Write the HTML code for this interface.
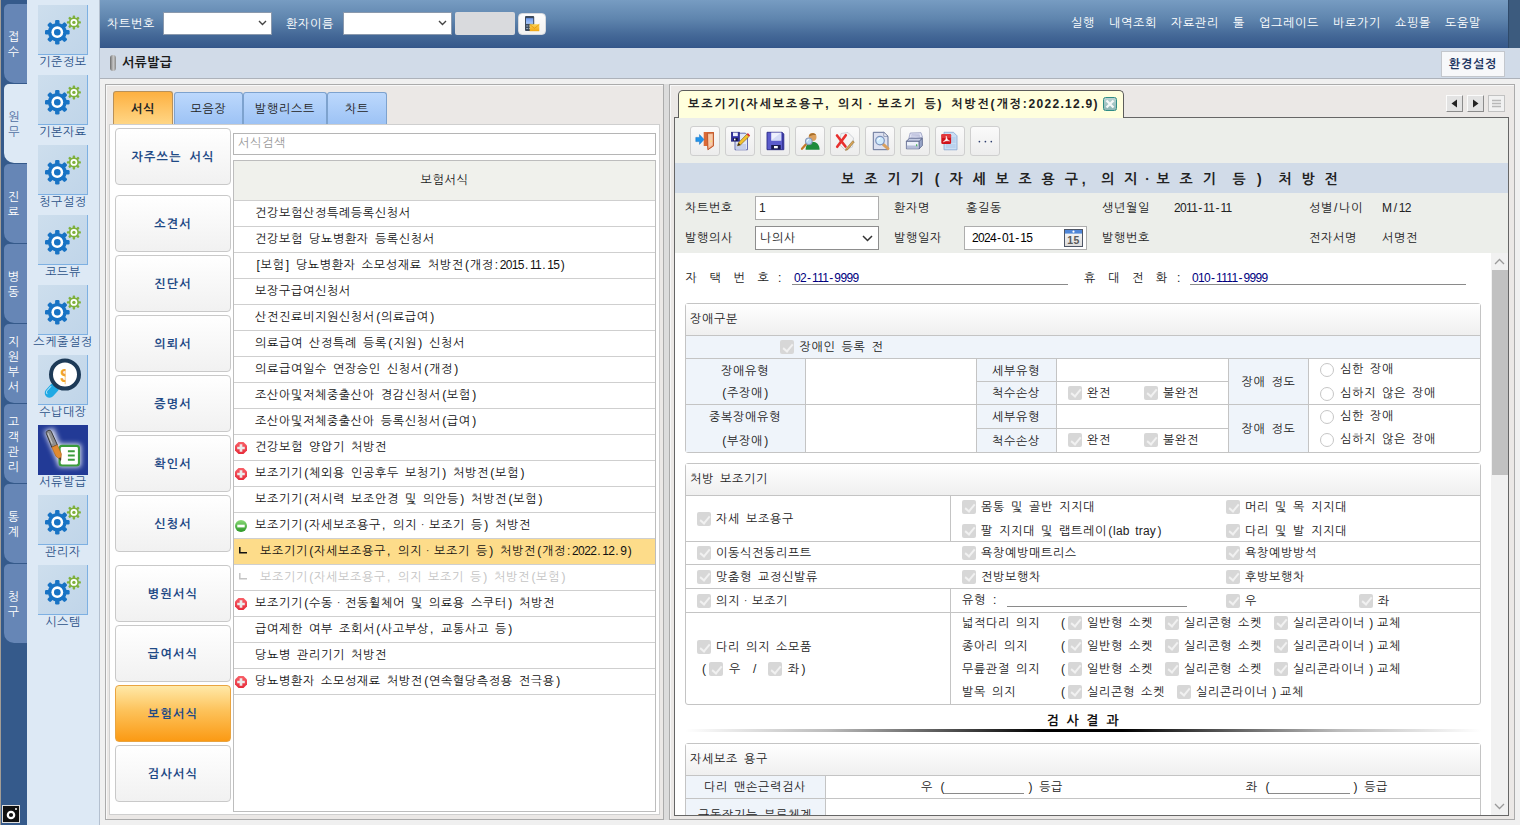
<!DOCTYPE html><html lang="ko"><head><meta charset="utf-8"><title>서류발급</title><style>
*{box-sizing:border-box;margin:0;padding:0}
html,body{width:1520px;height:825px;overflow:hidden;background:#f0f0f0}
body{position:relative;font-family:"Liberation Sans","NanumGothic",sans-serif;font-size:12px;letter-spacing:.7px;word-spacing:2px;color:#222;line-height:14px}
.abs{position:absolute}
.n{letter-spacing:-.65px}
.q{margin-left:1.4px}
.p{margin-left:1px;letter-spacing:1.7px}
.d{margin:0 1px;letter-spacing:0}
.b{font-weight:bold}
/* far-left strip */
#strip{left:0;top:0;width:27px;height:825px;background:#355a8b;border-left:1px solid #a39d95}
.vt{position:absolute;left:3px;width:24px;padding-right:5px;padding-top:2px;height:79px;background:#6686b6;border-radius:5px 0 0 10px;color:#fff;text-align:center;display:flex;flex-direction:column;justify-content:center;line-height:15px;letter-spacing:0;box-shadow:inset -1px 0 0 #5474a4}
.vt.sel{background:#dde9f5;color:#4f6ea2;width:25px;box-shadow:none}
#icol{left:27px;top:0;width:73px;height:825px;background:#dde9f5;border-right:1px solid #b4c0cf}
.tile{position:absolute;left:11px;width:50px;height:50px;background:linear-gradient(135deg,#cddeed,#c0d5e9);border-right:1px solid #7db0e2;border-bottom:1px solid #7db0e2}
.tl{position:absolute;left:0;width:72px;text-align:center;color:#2b5288;white-space:nowrap;letter-spacing:.6px}
/* top bar */
#top{left:100px;top:0;width:1420px;height:48px;background:linear-gradient(#779cc2 0,#5f85ae 40%,#446897 75%,#36598b 100%);border-bottom:1px solid #34568a;color:#fff}
#top .lb{position:absolute;top:17px;white-space:nowrap}
.cmb{position:absolute;top:12px;height:23px;background:#fff;border:1px solid #8a99ad}
#titlebar{left:100px;top:48px;width:1420px;height:31px;background:#d1dbe8;border-bottom:1px solid #adb2ba}
/* panels */
.panel{background:#ebe8e6;border:1px solid #ababab;box-shadow:inset 1px 1px 0 #f8f8f8}
.tab{position:absolute;height:33px;border:1px solid #7da2ce;border-bottom:none;border-radius:3px 3px 0 0;background:linear-gradient(#bcd8fc,#9cc2f5);text-align:center;line-height:32px;letter-spacing:.8px}
.tab.on{background:linear-gradient(#fdb040,#fec668 55%,#ffd787);border-color:#b8915a;font-weight:bold}
.sbtn{position:absolute;left:10px;width:116px;height:57px;border:1px solid #c9c9c9;border-radius:4px;background:linear-gradient(#ffffff,#f1f1f1);color:#1f4a86;font-weight:bold;text-align:center;line-height:55px;letter-spacing:1.3px;word-spacing:3px}
.sbtn.on{background:linear-gradient(#ffe9a8 0,#fdc25a 45%,#fb9a14 100%);border-color:#e9a440}
.row{position:absolute;left:0;width:421px;height:26px;border-bottom:1px solid #cfcfcf;line-height:25px;white-space:nowrap;color:#111;padding-left:21px}
.row.sub{padding-left:26px}
.ico{position:absolute;left:1px;top:7px;width:12px;height:12px}
/* form */
.gb{position:absolute;border:1px solid #c4c4c4;border-radius:3px;background:#fff;overflow:hidden}
.gh{position:absolute;left:0;top:0;right:0;height:31px;background:linear-gradient(#ffffff,#f0f0f0);border-bottom:1px solid #c4c4c4;line-height:29px;padding-left:4px}
.hl{position:absolute;height:1px;background:#c4c4c4}
.vl{position:absolute;width:1px;background:#c4c4c4}
.lbc{position:absolute;background:#eff4fa;text-align:center}
.t{position:absolute;white-space:nowrap;line-height:14px}
.cb{position:absolute;width:14px;height:14px;border-radius:2px;background:#d7d7d7}
.cb:after{content:"";position:absolute;left:4.5px;top:1.5px;width:4px;height:8px;border:solid #f1f1f1;border-width:0 2px 2px 0;transform:rotate(40deg)}
.rd{position:absolute;width:14px;height:14px;border-radius:50%;border:1px solid #c6c6c6;background:#fff}
.tb{position:absolute;top:9px;width:30px;height:30px;border:1px solid #cfcfcf;border-radius:3px;background:linear-gradient(#fafafa,#ececec)}
.tb svg{position:absolute;left:5px;top:5px;overflow:visible}
</style></head><body>
<svg width="0" height="0" style="position:absolute"><defs><linearGradient id="rg" x1="0" y1="0" x2="0" y2="1"><stop offset="0" stop-color="#f86068"/><stop offset="1" stop-color="#e62c3a"/></linearGradient><linearGradient id="gg" x1="0" y1="0" x2="0" y2="1"><stop offset="0" stop-color="#8adb78"/><stop offset="1" stop-color="#2b9626"/></linearGradient></defs></svg>
<div id="strip" class="abs">
<div class="vt" style="top:4px"><span>접</span><span>수</span></div>
<div class="vt sel" style="top:84px"><span>원</span><span>무</span></div>
<div class="vt" style="top:164px"><span>진</span><span>료</span></div>
<div class="vt" style="top:244px"><span>병</span><span>동</span></div>
<div class="vt" style="top:324px"><span>지</span><span>원</span><span>부</span><span>서</span></div>
<div class="vt" style="top:404px"><span>고</span><span>객</span><span>관</span><span>리</span></div>
<div class="vt" style="top:484px"><span>통</span><span>계</span></div>
<div class="vt" style="top:564px"><span>청</span><span>구</span></div>
<div class="abs" style="left:1px;top:805px;width:18px;height:18px;background:#111;border:1px solid #ddd"><svg width="16" height="16" viewBox="0 0 16 16"><circle cx="8" cy="9" r="3.2" fill="none" stroke="#fff" stroke-width="2.2"/><circle cx="13" cy="3" r="1" fill="#fff"/></svg></div>
</div>
<div id="icol" class="abs">
<div class="tile" style="top:5px"><svg width="50" height="50" viewBox="0 0 50 50"><g transform="translate(19.300,27.200)"><g fill="#1873c4"><rect x="-2.200" y="-12.300" width="4.400" height="24.600" rx="1.200" transform="rotate(0)"/><rect x="-2.200" y="-12.300" width="4.400" height="24.600" rx="1.200" transform="rotate(45)"/><rect x="-2.200" y="-12.300" width="4.400" height="24.600" rx="1.200" transform="rotate(90)"/><rect x="-2.200" y="-12.300" width="4.400" height="24.600" rx="1.200" transform="rotate(135)"/><circle r="9.300"/></g><circle r="5.900" fill="#fff"/><circle r="3.300" fill="#1873c4"/></g><g transform="translate(35.900,17.400)"><g fill="#7fb13c"><rect x="-1.200" y="-7" width="2.400" height="14" rx=".700" transform="rotate(0)"/><rect x="-1.200" y="-7" width="2.400" height="14" rx=".700" transform="rotate(45)"/><rect x="-1.200" y="-7" width="2.400" height="14" rx=".700" transform="rotate(90)"/><rect x="-1.200" y="-7" width="2.400" height="14" rx=".700" transform="rotate(135)"/><circle r="5"/></g><circle r="3.400" fill="#fff"/><circle r="1.700" fill="#7fb13c"/></g></svg></div>
<div class="tl" style="top:55px">기준정보</div>
<div class="tile" style="top:75px"><svg width="50" height="50" viewBox="0 0 50 50"><g transform="translate(19.300,27.200)"><g fill="#1873c4"><rect x="-2.200" y="-12.300" width="4.400" height="24.600" rx="1.200" transform="rotate(0)"/><rect x="-2.200" y="-12.300" width="4.400" height="24.600" rx="1.200" transform="rotate(45)"/><rect x="-2.200" y="-12.300" width="4.400" height="24.600" rx="1.200" transform="rotate(90)"/><rect x="-2.200" y="-12.300" width="4.400" height="24.600" rx="1.200" transform="rotate(135)"/><circle r="9.300"/></g><circle r="5.900" fill="#fff"/><circle r="3.300" fill="#1873c4"/></g><g transform="translate(35.900,17.400)"><g fill="#7fb13c"><rect x="-1.200" y="-7" width="2.400" height="14" rx=".700" transform="rotate(0)"/><rect x="-1.200" y="-7" width="2.400" height="14" rx=".700" transform="rotate(45)"/><rect x="-1.200" y="-7" width="2.400" height="14" rx=".700" transform="rotate(90)"/><rect x="-1.200" y="-7" width="2.400" height="14" rx=".700" transform="rotate(135)"/><circle r="5"/></g><circle r="3.400" fill="#fff"/><circle r="1.700" fill="#7fb13c"/></g></svg></div>
<div class="tl" style="top:125px">기본자료</div>
<div class="tile" style="top:145px"><svg width="50" height="50" viewBox="0 0 50 50"><g transform="translate(19.300,27.200)"><g fill="#1873c4"><rect x="-2.200" y="-12.300" width="4.400" height="24.600" rx="1.200" transform="rotate(0)"/><rect x="-2.200" y="-12.300" width="4.400" height="24.600" rx="1.200" transform="rotate(45)"/><rect x="-2.200" y="-12.300" width="4.400" height="24.600" rx="1.200" transform="rotate(90)"/><rect x="-2.200" y="-12.300" width="4.400" height="24.600" rx="1.200" transform="rotate(135)"/><circle r="9.300"/></g><circle r="5.900" fill="#fff"/><circle r="3.300" fill="#1873c4"/></g><g transform="translate(35.900,17.400)"><g fill="#7fb13c"><rect x="-1.200" y="-7" width="2.400" height="14" rx=".700" transform="rotate(0)"/><rect x="-1.200" y="-7" width="2.400" height="14" rx=".700" transform="rotate(45)"/><rect x="-1.200" y="-7" width="2.400" height="14" rx=".700" transform="rotate(90)"/><rect x="-1.200" y="-7" width="2.400" height="14" rx=".700" transform="rotate(135)"/><circle r="5"/></g><circle r="3.400" fill="#fff"/><circle r="1.700" fill="#7fb13c"/></g></svg></div>
<div class="tl" style="top:195px">청구설정</div>
<div class="tile" style="top:215px"><svg width="50" height="50" viewBox="0 0 50 50"><g transform="translate(19.300,27.200)"><g fill="#1873c4"><rect x="-2.200" y="-12.300" width="4.400" height="24.600" rx="1.200" transform="rotate(0)"/><rect x="-2.200" y="-12.300" width="4.400" height="24.600" rx="1.200" transform="rotate(45)"/><rect x="-2.200" y="-12.300" width="4.400" height="24.600" rx="1.200" transform="rotate(90)"/><rect x="-2.200" y="-12.300" width="4.400" height="24.600" rx="1.200" transform="rotate(135)"/><circle r="9.300"/></g><circle r="5.900" fill="#fff"/><circle r="3.300" fill="#1873c4"/></g><g transform="translate(35.900,17.400)"><g fill="#7fb13c"><rect x="-1.200" y="-7" width="2.400" height="14" rx=".700" transform="rotate(0)"/><rect x="-1.200" y="-7" width="2.400" height="14" rx=".700" transform="rotate(45)"/><rect x="-1.200" y="-7" width="2.400" height="14" rx=".700" transform="rotate(90)"/><rect x="-1.200" y="-7" width="2.400" height="14" rx=".700" transform="rotate(135)"/><circle r="5"/></g><circle r="3.400" fill="#fff"/><circle r="1.700" fill="#7fb13c"/></g></svg></div>
<div class="tl" style="top:265px">코드뷰</div>
<div class="tile" style="top:285px"><svg width="50" height="50" viewBox="0 0 50 50"><g transform="translate(19.300,27.200)"><g fill="#1873c4"><rect x="-2.200" y="-12.300" width="4.400" height="24.600" rx="1.200" transform="rotate(0)"/><rect x="-2.200" y="-12.300" width="4.400" height="24.600" rx="1.200" transform="rotate(45)"/><rect x="-2.200" y="-12.300" width="4.400" height="24.600" rx="1.200" transform="rotate(90)"/><rect x="-2.200" y="-12.300" width="4.400" height="24.600" rx="1.200" transform="rotate(135)"/><circle r="9.300"/></g><circle r="5.900" fill="#fff"/><circle r="3.300" fill="#1873c4"/></g><g transform="translate(35.900,17.400)"><g fill="#7fb13c"><rect x="-1.200" y="-7" width="2.400" height="14" rx=".700" transform="rotate(0)"/><rect x="-1.200" y="-7" width="2.400" height="14" rx=".700" transform="rotate(45)"/><rect x="-1.200" y="-7" width="2.400" height="14" rx=".700" transform="rotate(90)"/><rect x="-1.200" y="-7" width="2.400" height="14" rx=".700" transform="rotate(135)"/><circle r="5"/></g><circle r="3.400" fill="#fff"/><circle r="1.700" fill="#7fb13c"/></g></svg></div>
<div class="tl" style="top:335px">스케줄설정</div>
<div class="tile" style="top:355px"><svg width="50" height="50" viewBox="0 0 50 50"><defs><clipPath id="hc"><rect x="0" y="0" width="27.600" height="50"/></clipPath></defs><path d="M16.500 32.500L11.500 38" stroke="#1fa9e4" stroke-width="9.500" stroke-linecap="round"/><path d="M12.800 31.500l-3.600 4c-1 1.200-.8 2.600-.2 3.300" fill="none" stroke="#d6f0fc" stroke-width="1" stroke-linecap="round"/><circle cx="27" cy="19.600" r="14" fill="#fff" stroke="#1d3a57" stroke-width="4"/><text x="27.600" y="26.600" font-size="19" font-weight="bold" text-anchor="middle" fill="#f0a22e" font-family="Liberation Sans,sans-serif" letter-spacing="0" clip-path="url(#hc)">$</text></svg></div>
<div class="tl" style="top:405px">수납대장</div>
<div class="tile" style="top:425px;background:#223a96;border:none"><svg width="50" height="50" viewBox="0 0 51 51"><defs><filter id="gl" x="-30%" y="-30%" width="160%" height="160%"><feGaussianBlur stdDeviation="2.600"/></filter></defs><rect width="51" height="51" fill="#223a96"/><g filter="url(#gl)" fill="#fff" opacity=".85"><rect x="20" y="19" width="24" height="24" rx="3"/><path d="M6 6l10-3 12 32-8 4z"/></g><rect x="22" y="21.300" width="19.800" height="20" rx="2.500" fill="#fff" stroke="#3b9c3c" stroke-width="2.200"/><path d="M30.500 26.800h7M30.500 31.100h7M30.500 35.400h7" stroke="#3b9c3c" stroke-width="1.900"/><path d="M8.500 8.600c-.8-2.600 3.800-4.500 5-2l6.200 13.600-5.600 2.600z" fill="#8d8d8d" stroke="#333" stroke-width="1"/><path d="M10 8.500l4.500 10.500" stroke="#c8c8c8" stroke-width="1.200"/><path d="M14.100 22.800l5.600-2.600 4.200 9.300-.6 6.300-5.100-4z" fill="#e08a30" stroke="#a45a18" stroke-width=".6"/><path d="M21.300 33.600l2.100 3.600-.1-4.100z" fill="#3a3a3a"/></svg></div>
<div class="tl" style="top:475px">서류발급</div>
<div class="tile" style="top:495px"><svg width="50" height="50" viewBox="0 0 50 50"><g transform="translate(19.300,27.200)"><g fill="#1873c4"><rect x="-2.200" y="-12.300" width="4.400" height="24.600" rx="1.200" transform="rotate(0)"/><rect x="-2.200" y="-12.300" width="4.400" height="24.600" rx="1.200" transform="rotate(45)"/><rect x="-2.200" y="-12.300" width="4.400" height="24.600" rx="1.200" transform="rotate(90)"/><rect x="-2.200" y="-12.300" width="4.400" height="24.600" rx="1.200" transform="rotate(135)"/><circle r="9.300"/></g><circle r="5.900" fill="#fff"/><circle r="3.300" fill="#1873c4"/></g><g transform="translate(35.900,17.400)"><g fill="#7fb13c"><rect x="-1.200" y="-7" width="2.400" height="14" rx=".700" transform="rotate(0)"/><rect x="-1.200" y="-7" width="2.400" height="14" rx=".700" transform="rotate(45)"/><rect x="-1.200" y="-7" width="2.400" height="14" rx=".700" transform="rotate(90)"/><rect x="-1.200" y="-7" width="2.400" height="14" rx=".700" transform="rotate(135)"/><circle r="5"/></g><circle r="3.400" fill="#fff"/><circle r="1.700" fill="#7fb13c"/></g></svg></div>
<div class="tl" style="top:545px">관리자</div>
<div class="tile" style="top:565px"><svg width="50" height="50" viewBox="0 0 50 50"><g transform="translate(19.300,27.200)"><g fill="#1873c4"><rect x="-2.200" y="-12.300" width="4.400" height="24.600" rx="1.200" transform="rotate(0)"/><rect x="-2.200" y="-12.300" width="4.400" height="24.600" rx="1.200" transform="rotate(45)"/><rect x="-2.200" y="-12.300" width="4.400" height="24.600" rx="1.200" transform="rotate(90)"/><rect x="-2.200" y="-12.300" width="4.400" height="24.600" rx="1.200" transform="rotate(135)"/><circle r="9.300"/></g><circle r="5.900" fill="#fff"/><circle r="3.300" fill="#1873c4"/></g><g transform="translate(35.900,17.400)"><g fill="#7fb13c"><rect x="-1.200" y="-7" width="2.400" height="14" rx=".700" transform="rotate(0)"/><rect x="-1.200" y="-7" width="2.400" height="14" rx=".700" transform="rotate(45)"/><rect x="-1.200" y="-7" width="2.400" height="14" rx=".700" transform="rotate(90)"/><rect x="-1.200" y="-7" width="2.400" height="14" rx=".700" transform="rotate(135)"/><circle r="5"/></g><circle r="3.400" fill="#fff"/><circle r="1.700" fill="#7fb13c"/></g></svg></div>
<div class="tl" style="top:615px">시스템</div>
</div>
<div id="top" class="abs">
<span class="lb" style="left:7px">차트번호</span>
<div class="cmb" style="left:63px;width:109px"><svg class="abs" style="right:4px;top:7px" width="9" height="6" viewBox="0 0 9 6"><path d="M1 1l3.5 3.5L8 1" fill="none" stroke="#444" stroke-width="1.4"/></svg></div>
<span class="lb" style="left:186px">환자이름</span>
<div class="cmb" style="left:243px;width:109px"><svg class="abs" style="right:4px;top:7px" width="9" height="6" viewBox="0 0 9 6"><path d="M1 1l3.5 3.5L8 1" fill="none" stroke="#444" stroke-width="1.4"/></svg></div>
<div class="abs" style="left:355px;top:12px;width:60px;height:23px;background:#d9dadd;border-radius:2px"></div>
<div class="abs" style="left:418px;top:12.500px;width:28px;height:22.500px;background:linear-gradient(#fdfdfd,#f1f1f1);border:1px solid #d6d9de;border-radius:4px"><svg class="abs" style="left:5px;top:1.500px" width="18" height="18" viewBox="0 0 18 18"><defs><linearGradient id="ps" x1="0" y1="0" x2="0" y2="1"><stop offset="0" stop-color="#6f9cf0"/><stop offset="1" stop-color="#a9c8f8"/></linearGradient><linearGradient id="ev" x1="0" y1="0" x2="0" y2="1"><stop offset="0" stop-color="#fcd455"/><stop offset="1" stop-color="#f2a612"/></linearGradient></defs><rect x="1" y="1" width="9.200" height="15" rx="1" fill="#3d4a5c"/><rect x="2" y="3.200" width="7.200" height="5.700" fill="url(#ps)"/><path d="M2.300 11h1.600M4.800 11h1.600M2.300 13.500h1.600M4.800 13.500h1.600" stroke="#9fb4cc" stroke-width="1.200"/><rect x="5.700" y="9.200" width="9.600" height="7" fill="url(#ev)"/><path d="M5.700 9.400l4.800 4 4.800-4" fill="none" stroke="#e3940f" stroke-width=".8"/></svg></div>
<span class="lb" style="left:971px;top:16px">실행</span>
<span class="lb" style="left:1009px;top:16px">내역조회</span>
<span class="lb" style="left:1071px;top:16px">자료관리</span>
<span class="lb" style="left:1133px;top:16px">툴</span>
<span class="lb" style="left:1159px;top:16px">업그레이드</span>
<span class="lb" style="left:1233px;top:16px">바로가기</span>
<span class="lb" style="left:1295px;top:16px">쇼핑몰</span>
<span class="lb" style="left:1345px;top:16px">도움말</span>
<div class="abs" style="left:1408px;top:0;width:12px;height:48px;background:#3c5b7e;border-left:1px solid #2f4a6a"></div>
</div>
<div id="titlebar" class="abs">
<div class="abs" style="left:10px;top:7px;width:6px;height:16px;border-radius:3px;background:linear-gradient(90deg,#6e6e6e,#c8c8c8 55%,#8a8a8a)"></div>
<span class="abs b" style="left:22px;top:8px;font-size:13px;letter-spacing:.4px;color:#1a1a1a;white-space:nowrap">서류발급</span>
<div class="abs b" style="left:1341px;top:3px;width:64px;height:26px;background:#f7f8fa;border:1px solid #c3c7cd;text-align:center;line-height:25px;color:#1d3561;letter-spacing:.8px">환경설정</div>
</div>
<div class="abs panel" style="left:105px;top:84px;width:559px;height:736px">
<div class="tab on" style="left:7px;top:6px;width:60px;height:34px;line-height:34px">서식</div>
<div class="tab" style="left:68px;top:7px;width:69px">모음장</div>
<div class="tab" style="left:137px;top:7px;width:84px">발행리스트</div>
<div class="tab" style="left:221px;top:7px;width:60px">차트</div>
<div class="abs" style="left:3px;top:39px;width:551px;height:691px;background:#fff;border:1px solid #cfcfcf">
<div class="sbtn" style="left:5px;top:3px;height:57px;line-height:57px">자주쓰는 서식</div>
<div class="sbtn" style="left:5px;top:70px;height:57px;line-height:57px">소견서</div>
<div class="sbtn" style="left:5px;top:130px;height:57px;line-height:57px">진단서</div>
<div class="sbtn" style="left:5px;top:190px;height:57px;line-height:57px">의뢰서</div>
<div class="sbtn" style="left:5px;top:250px;height:57px;line-height:57px">증명서</div>
<div class="sbtn" style="left:5px;top:310px;height:57px;line-height:57px">확인서</div>
<div class="sbtn" style="left:5px;top:370px;height:57px;line-height:57px">신청서</div>
<div class="sbtn" style="left:5px;top:440px;height:57px;line-height:57px">병원서식</div>
<div class="sbtn" style="left:5px;top:500px;height:57px;line-height:57px">급여서식</div>
<div class="sbtn on" style="left:5px;top:560px;height:57px;line-height:57px">보험서식</div>
<div class="sbtn" style="left:5px;top:620px;height:57px;line-height:57px">검사서식</div>
<div class="abs" style="left:123px;top:8px;width:423px;height:22px;border:1px solid #b5b5b5;background:#fff;color:#9a9a9a;line-height:19px;padding-left:4px">서식검색</div>
<div class="abs" style="left:123px;top:35px;width:423px;height:652px;border:1px solid #bdbdbd;background:#fff;overflow:hidden">
<div class="abs" style="left:0;top:0;width:421px;height:40px;background:#f0f1ec;border-bottom:1px solid #cfcfcf;text-align:center;line-height:38px">보험서식</div>
<div class="row" style="top:40px">건강보험산정특례등록신청서</div>
<div class="row" style="top:66px">건강보험 당뇨병환자 등록신청서</div>
<div class="row" style="top:92px"><span class="q">[</span>보험<span class="q">]</span> 당뇨병환자 소모성재료 처방전<span class="q">(</span>개정<span class="p">:</span><span class="n">2015</span><span class="p">.</span><span class="n">11</span><span class="p">.</span><span class="n">15</span><span class="q">)</span></div>
<div class="row" style="top:118px">보장구급여신청서</div>
<div class="row" style="top:144px">산전진료비지원신청서<span class="q">(</span>의료급여<span class="q">)</span></div>
<div class="row" style="top:170px">의료급여 산정특례 등록<span class="q">(</span>지원<span class="q">)</span> 신청서</div>
<div class="row" style="top:196px">의료급여일수 연장승인 신청서<span class="q">(</span>개정<span class="q">)</span></div>
<div class="row" style="top:222px">조산아및저체중출산아 경감신청서<span class="q">(</span>보험<span class="q">)</span></div>
<div class="row" style="top:248px">조산아및저체중출산아 등록신청서<span class="q">(</span>급여<span class="q">)</span></div>
<div class="row" style="top:274px"><svg class="ico" viewBox="0 0 12 12"><path d="M3.500 0h5L12 3.500v5L8.500 12h-5L0 8.500v-5z" fill="url(#rg)"/><path d="M6 2.200v7.600M2.200 6h7.600" stroke="#ebebeb" stroke-width="2.700"/></svg>건강보험 양압기 처방전</div>
<div class="row" style="top:300px"><svg class="ico" viewBox="0 0 12 12"><path d="M3.500 0h5L12 3.500v5L8.500 12h-5L0 8.500v-5z" fill="url(#rg)"/><path d="M6 2.200v7.600M2.200 6h7.600" stroke="#ebebeb" stroke-width="2.700"/></svg>보조기기<span class="q">(</span>체외용 인공후두 보청기<span class="q">)</span> 처방전<span class="q">(</span>보험<span class="q">)</span></div>
<div class="row" style="top:326px">보조기기<span class="q">(</span>저시력 보조안경 및 의안등<span class="q">)</span> 처방전<span class="q">(</span>보험<span class="q">)</span></div>
<div class="row" style="top:352px"><svg class="ico" viewBox="0 0 12 12"><circle cx="6" cy="6" r="6" fill="url(#gg)"/><rect x="2.300" y="4.700" width="7.400" height="2.700" fill="#fff"/></svg>보조기기<span class="q">(</span>자세보조용구<span class="p">,</span> 의지ㆍ보조기 등<span class="q">)</span> 처방전</div>
<div class="row sub" style="top:378px;background:#fddc8a;"><svg class="abs" style="left:5px;top:8px" width="8" height="7" viewBox="0 0 8 7"><path d="M.8 0v5.700H8" fill="none" stroke="#111" stroke-width="1.500"/></svg>보조기기<span class="q">(</span>자세보조용구<span class="p">,</span> 의지ㆍ보조기 등<span class="q">)</span> 처방전<span class="q">(</span>개정<span class="p">:</span><span class="n">2022</span><span class="p">.</span><span class="n">12</span><span class="p">.</span><span class="n">9</span><span class="q">)</span></div>
<div class="row sub" style="top:404px;color:#c4c4c4;"><svg class="abs" style="left:5px;top:8px" width="8" height="7" viewBox="0 0 8 7"><path d="M.8 0v5.700H8" fill="none" stroke="#c4c4c4" stroke-width="1.500"/></svg>보조기기<span class="q">(</span>자세보조용구<span class="p">,</span> 의지 보조기 등<span class="q">)</span> 처방전<span class="q">(</span>보험<span class="q">)</span></div>
<div class="row" style="top:430px"><svg class="ico" viewBox="0 0 12 12"><path d="M3.500 0h5L12 3.500v5L8.500 12h-5L0 8.500v-5z" fill="url(#rg)"/><path d="M6 2.200v7.600M2.200 6h7.600" stroke="#ebebeb" stroke-width="2.700"/></svg>보조기기<span class="q">(</span>수동ㆍ전동휠체어 및 의료용 스쿠터<span class="q">)</span> 처방전</div>
<div class="row" style="top:456px">급여제한 여부 조회서<span class="q">(</span>사고부상<span class="p">,</span> 교통사고 등<span class="q">)</span></div>
<div class="row" style="top:482px">당뇨병 관리기기 처방전</div>
<div class="row" style="top:508px"><svg class="ico" viewBox="0 0 12 12"><path d="M3.500 0h5L12 3.500v5L8.500 12h-5L0 8.500v-5z" fill="url(#rg)"/><path d="M6 2.200v7.600M2.200 6h7.600" stroke="#ebebeb" stroke-width="2.700"/></svg>당뇨병환자 소모성재료 처방전<span class="q">(</span>연속혈당측정용 전극용<span class="q">)</span></div>
</div>
</div>
</div>
<div class="abs" style="left:664px;top:84px;width:5px;height:736px;background:#dcdcdc"></div>
<div class="abs panel" style="left:669px;top:84px;width:846px;height:736px"></div>
<div class="abs b" style="left:678px;top:90px;width:446px;height:28px;background:#ffffdd;border:1px solid #5c5c5c;border-bottom:none;border-radius:5px 5px 0 0;line-height:27px;padding-left:9px;white-space:nowrap;letter-spacing:1.85px;word-spacing:2.5px;z-index:3">보조기기(자세보조용구, 의지ㆍ보조기 등) 처방전(개정:<span style="letter-spacing:1.3px">2022.12.9</span>)</div>
<div class="abs" style="left:1103px;top:97px;width:14px;height:14px;background:linear-gradient(#b9d3d2,#8db6b5);border:1px solid #2f8c85;border-radius:2.500px;z-index:4"><svg width="12" height="12" viewBox="0 0 12 12"><path d="M2.500 2.500l7 7M9.500 2.500l-7 7" stroke="#f4f8f8" stroke-width="2.300"/></svg></div>
<div class="abs" style="left:1446px;top:95px;width:17px;height:17px;background:#e3e3e3;border:1px solid;border-color:#fbfbfb #8c8c8c #8c8c8c #fbfbfb"><svg width="15" height="15" viewBox="0 0 15 15"><path d="M10 3.5v8L4.5 7.5z" fill="#222"/></svg></div>
<div class="abs" style="left:1467px;top:95px;width:17px;height:17px;background:#e3e3e3;border:1px solid;border-color:#fbfbfb #8c8c8c #8c8c8c #fbfbfb"><svg width="15" height="15" viewBox="0 0 15 15"><path d="M5 3.5v8l5.5-4z" fill="#222"/></svg></div>
<div class="abs" style="left:1488px;top:95px;width:17px;height:17px;background:#f1f1f1;border:1px solid #c2c2c2"><svg width="15" height="15" viewBox="0 0 15 15"><path d="M3 4.5h9M3 7.5h9M3 10.5h9" stroke="#b8b8b8" stroke-width="1.4"/></svg></div>
<div class="abs" style="left:674px;top:117px;width:835px;height:699px;background:#eceeea;border:1px solid #666;overflow:hidden;z-index:2">
<div class="tb" style="left:15px;top:8px"><svg width="20" height="20" viewBox="0 0 20 20"><path d="M7.700 0h10.300v14l-6.200 4.200-.6-4.200H7.700z" fill="#dc6a36"/><path d="M11.400 1.200l6-.2v12.700l-5.500 3.900z" fill="#f4b48e" stroke="#b24e26" stroke-width=".8"/><path d="M12.500 2.500l3.800-.2v10.400l-3.500 2.400z" fill="#f8cfb2" opacity=".8"/><circle cx="15.200" cy="9.300" r=".8" fill="#f7e36a"/><path d="M-.2 5.400h3.700V2.600L8 7.500l-4.500 4.900V9.600H-.2z" fill="#1f93ea" stroke="#1670c4" stroke-width=".5"/></svg></div>
<div class="tb" style="left:50px;top:8px"><svg width="20" height="20" viewBox="0 0 20 20"><path d="M4 1.200h10.500l2 2v14.600H4z" fill="#dfe6f6" stroke="#5860a8" stroke-width=".9"/><path d="M5 12h10v5.800H5z" fill="#c5cfea"/><rect x=".3" y=".2" width="8.200" height="9" fill="#2f2fa2" stroke="#1d1d70" stroke-width=".6"/><rect x="2" y=".6" width="4.800" height="3.600" fill="#eceffc"/><rect x="2.300" y="6" width="4.400" height="3" fill="#15153f"/><rect x="3" y="6.600" width="1.500" height="1.800" fill="#fff"/><path d="M15.800 2.200l2.300 2.300-8.600 8.400-3 .9 1-3.100z" fill="#f2c12e" stroke="#7a5a10" stroke-width=".6"/><path d="M15.800 2.200l2.300 2.300 1-1.100-2.200-2.300z" fill="#e0262c"/><path d="M6.500 13.800l1-3.100 2 2.200z" fill="#3b2a14"/></svg></div>
<div class="tb" style="left:85px;top:8px"><svg width="20" height="20" viewBox="0 0 20 20"><path d="M1 .3h15l1.800 1.600v15.800H1z" fill="#5c5ccc" stroke="#2a2a88" stroke-width=".9"/><path d="M16 .5l1.600 1.500v15.500H16z" fill="#38389c"/><rect x="5.200" y=".6" width="10" height="8" fill="#eef1fd"/><path d="M5.200 8.600l10-8v8z" fill="#c9d2f4" opacity=".7"/><rect x="5.200" y="13" width="9.500" height="4.500" fill="#1a1a4e"/><rect x="8" y="14" width="3.800" height="2.300" fill="#fff"/></svg></div>
<div class="tb" style="left:120px;top:8px"><svg width="20" height="20" viewBox="0 0 20 20"><path d="M4.600 17.800c0-5.200 3.200-8 7-8s7 2.800 7 8z" fill="#1f8c3c"/><circle cx="11.600" cy="5" r="3.900" fill="#dba15e"/><path d="M7.800 4.400c.6-3.400 5.200-4.300 7.300-1.300-2.200-.5-4.900.2-7.300 1.300z" fill="#a86f2a"/><path d="M5 12.200L1 16.800" stroke="#c57a28" stroke-width="2.200" stroke-linecap="round"/><circle cx="7.800" cy="9.300" r="3.300" fill="#b4d8f4" stroke="#8a98b8" stroke-width="1.100"/><path d="M6 9.500a2 2 0 0 1 2-2" fill="none" stroke="#fff" stroke-width=".9"/></svg></div>
<div class="tb" style="left:155px;top:8px"><svg width="20" height="20" viewBox="0 0 20 20"><path d="M5 1.500l7-1 5.500 5.500-1 9-8 2.500-5-5z" fill="#f3f3f3" stroke="#c4c8cf" stroke-width=".8"/><path d="M10 16.700l6.800-8 1.500 1.300-6.500 7.700-2.300.7z" fill="#d9a456" stroke="#7b5a20" stroke-width=".5"/><path d="M1 3.500l8.500 11M9.800 3.200L1.200 14.800" stroke="#e8302e" stroke-width="2.600" stroke-linecap="round"/></svg></div>
<div class="tb" style="left:190px;top:8px"><svg width="20" height="20" viewBox="0 0 20 20"><path d="M2.300 .3h10.500l4.200 4v13.400H2.300z" fill="#dde1f0" stroke="#56648c" stroke-width=".9"/><path d="M12.800 .3v4h4.200z" fill="#f6f7fc" stroke="#56648c" stroke-width=".6"/><path d="M12.200 12.400l4.800 4.200" stroke="#d9a05e" stroke-width="3" stroke-linecap="round"/><circle cx="9" cy="8.600" r="4.300" fill="#cfeafc" stroke="#7c92bc" stroke-width="1.200"/><path d="M6.800 8.600a2.300 2.300 0 0 1 2.300-2.300" fill="none" stroke="#fff" stroke-width="1"/></svg></div>
<div class="tb" style="left:225px;top:8px"><svg width="20" height="20" viewBox="0 0 20 20"><path d="M4.200 1l10.800-.3 1.500 4.600-14 2.500z" fill="#e3e5f6" stroke="#8a90b8" stroke-width=".7"/><path d="M5.500 2.400l8-.2M5 3.900l9-.5M4.500 5.400l9.500-.8" stroke="#a4a9cc" stroke-width=".6"/><path d="M.4 9.300l3-3h13l-3.200 3z" fill="#c6cde4" stroke="#4a5680" stroke-width=".7"/><path d="M.4 9.300h12.800v7.500H.4z" fill="#edf1fa" stroke="#4a5680" stroke-width=".8"/><path d="M13.200 9.300l3.200-3v7.200l-3.200 3.300z" fill="#98a5c8" stroke="#4a5680" stroke-width=".7"/><path d="M.8 13.500h12v3H.8z" fill="#b5bdd8"/><rect x="10.200" y="12.200" width="1" height="2" fill="#2fae3a"/></svg></div>
<div class="tb" style="left:260px;top:8px"><svg width="20" height="20" viewBox="0 0 20 20"><path d="M3 .3h9.500l3.500 3.500v14H3z" fill="#c9def4" stroke="#86a6d0" stroke-width=".8"/><path d="M10 6h4.500M10 8h4.500M10 10h4.500M5 13h9.500M5 15h9.500" stroke="#9fbbe0" stroke-width=".7"/><rect x=".3" y="2" width="9.800" height="10" rx="1.300" fill="#d0121a"/><rect x=".3" y="2" width="9.800" height="4" rx="1.300" fill="#e8494c" opacity=".7"/><path d="M2.300 9.800c2.200-.9 3.300-3.300 2.900-5.800.3 2.500 1.600 4.300 3.400 5-1.900-.4-4.300-.2-6.300.8z" fill="#fff" stroke="#fff" stroke-width=".5" stroke-linejoin="round"/></svg></div>
<div class="tb" style="left:295px;top:8px"><svg width="20" height="20" viewBox="0 0 20 20"><circle cx="3.400" cy="9.600" r=".85" fill="#2c3c6c"/><circle cx="9.400" cy="9.600" r=".85" fill="#2c3c6c"/><circle cx="15.300" cy="9.600" r=".85" fill="#2c3c6c"/></svg></div>
<div class="abs" style="left:0px;top:45px;width:833px;height:30px;background:#d1dbe8"></div>
<span class="t" style="left:66px;top:53px;width:700px;text-align:center;font-weight:bold;font-size:14px;letter-spacing:3px;word-spacing:0;color:#222;line-height:16px">보 조 기 기 <span class="q">(</span> 자 세 보 조 용 구<span class="p">,</span>&nbsp; 의 지ㆍ보 조 기&nbsp; 등 <span class="q">)</span>&nbsp; 처 방 전</span>
<span class="t" style="left:10px;top:83px;">차트번호</span>
<div class="abs" style="left:80px;top:78px;width:124px;height:24px;background:#fff;border:1px solid #adadad;line-height:22px;padding-left:3px;letter-spacing:0">1</div>
<span class="t" style="left:219px;top:83px;">환자명</span>
<span class="t" style="left:291px;top:83px;">홍길동</span>
<span class="t" style="left:427px;top:83px;">생년월일</span>
<span class="t" style="left:499px;top:83px;"><span class="n">2011</span><span class="d">-</span><span class="n">11</span><span class="d">-</span><span class="n">11</span></span>
<span class="t" style="left:634px;top:83px;">성별<span class="p">/</span>나이</span>
<span class="t" style="left:707px;top:83px;">M<span class="p">/</span><span class="n">12</span></span>
<span class="t" style="left:10px;top:113px;">발행의사</span>
<div class="abs" style="left:80px;top:108px;width:124px;height:24px;background:#fff;border:1px solid #8d8d8d;line-height:23px;padding-left:4px">나의사<svg class="abs" style="right:5px;top:8px" width="11" height="7" viewBox="0 0 11 7"><path d="M1 1l4.5 4.5L10 1" fill="none" stroke="#333" stroke-width="1.5"/></svg></div>
<span class="t" style="left:219px;top:113px;">발행일자</span>
<div class="abs" style="left:289px;top:108px;width:123px;height:24px;background:#fff;border:1px solid #adadad;line-height:22px;padding-left:7px;color:#000"><span class="n">2024</span><span class="d">-</span><span class="n">01</span><span class="d">-</span><span class="n">15</span></div>
<svg class="abs" style="left:389px;top:111px" width="19" height="18" viewBox="0 0 19 18"><defs><linearGradient id="cg" x1="0" y1="0" x2="0" y2="1"><stop offset="0" stop-color="#fbfbfb"/><stop offset="1" stop-color="#dcdcdc"/></linearGradient></defs><rect x=".5" y=".5" width="18" height="17" fill="url(#cg)" stroke="#4e5666"/><rect x="1" y="1" width="17" height="3.600" fill="#4f86d8"/><circle cx="9.500" cy="2.700" r="1.100" fill="#fff"/><text x="9.500" y="15.300" font-size="10.500" font-weight="bold" text-anchor="middle" fill="#5a5a5a" font-family="Liberation Sans,sans-serif" letter-spacing=".3">15</text></svg>
<span class="t" style="left:427px;top:113px;">발행번호</span>
<span class="t" style="left:634px;top:113px;">전자서명</span>
<span class="t" style="left:707px;top:113px;">서명전</span>
<div class="abs" style="left:0px;top:135px;width:816px;height:562px;background:#fff"></div>
<div class="abs" style="left:816px;top:135px;width:17px;height:562px;background:#f1f1f1"></div>
<div class="abs" style="left:817px;top:152px;width:16px;height:205px;background:#c1c1c1"></div>
<svg class="abs" style="left:819px;top:140px" width="11" height="7" viewBox="0 0 11 7"><path d="M1 6l4.5-4.5L10 6" fill="none" stroke="#9a9a9a" stroke-width="1.3"/></svg>
<svg class="abs" style="left:819px;top:685px" width="11" height="7" viewBox="0 0 11 7"><path d="M1 1l4.5 4.5L10 1" fill="none" stroke="#9a9a9a" stroke-width="1.3"/></svg>
<span class="t" style="left:10.5px;top:152.7px;letter-spacing:12.7px">자택번호</span>
<span class="t" style="left:102px;top:152.7px;"><span class="p">:</span></span>
<span class="t" style="left:119px;top:152.7px;color:#000080"><span class="n">02</span><span class="d">-</span><span class="n">111</span><span class="d">-</span><span class="n">9999</span></span>
<i class="hl" style="left:117px;top:166px;width:276px;background:#8a8a8a"></i>
<span class="t" style="left:409px;top:152.7px;letter-spacing:12.7px">휴대전화</span>
<span class="t" style="left:501px;top:152.7px;"><span class="p">:</span></span>
<span class="t" style="left:517px;top:152.7px;color:#000080"><span class="n">010</span><span class="d">-</span><span class="n">1111</span><span class="d">-</span><span class="n">9999</span></span>
<i class="hl" style="left:515px;top:166px;width:276px;background:#8a8a8a"></i>
<div class="gb" style="left:10px;top:185px;width:796px;height:150px;"></div>
<div class="abs" style="left:11px;top:186px;width:794px;height:31px;background:linear-gradient(#fff,#efefef)"></div>
<span class="t" style="left:15px;top:193.5px;">장애구분</span>
<i class="hl" style="left:11px;top:217px;width:794px"></i>
<div class="abs" style="left:11px;top:218px;width:794px;height:22px;background:#eff4fa"></div>
<i class="hl" style="left:11px;top:240px;width:794px"></i>
<i class="cb" style="left:105px;top:222px"></i>
<span class="t" style="left:124.5px;top:222px;">장애인 등록 전</span>
<div class="abs" style="left:11px;top:241px;width:119px;height:93px;background:#eff4fa"></div>
<div class="abs" style="left:302px;top:241px;width:79px;height:93px;background:#eff4fa"></div>
<div class="abs" style="left:554px;top:241px;width:79px;height:93px;background:#eff4fa"></div>
<i class="hl" style="left:11px;top:286px;width:794px"></i>
<i class="hl" style="left:302px;top:263px;width:251px"></i>
<i class="hl" style="left:302px;top:310px;width:251px"></i>
<i class="vl" style="left:130px;top:241px;height:93px"></i>
<i class="vl" style="left:301px;top:241px;height:93px"></i>
<i class="vl" style="left:381px;top:241px;height:93px"></i>
<i class="vl" style="left:553px;top:241px;height:93px"></i>
<i class="vl" style="left:633px;top:241px;height:93px"></i>
<span class="t" style="left:-30px;top:245.8px;width:200px;text-align:center;">장애유형</span>
<span class="t" style="left:-30px;top:267.8px;width:200px;text-align:center;"><span class="q">(</span>주장애<span class="q">)</span></span>
<span class="t" style="left:-30px;top:291.8px;width:200px;text-align:center;">중복장애유형</span>
<span class="t" style="left:-30px;top:315.8px;width:200px;text-align:center;"><span class="q">(</span>부장애<span class="q">)</span></span>
<span class="t" style="left:241px;top:245.8px;width:200px;text-align:center;">세부유형</span>
<span class="t" style="left:241px;top:267.8px;width:200px;text-align:center;">척수손상</span>
<span class="t" style="left:241px;top:291.8px;width:200px;text-align:center;">세부유형</span>
<span class="t" style="left:241px;top:315.8px;width:200px;text-align:center;">척수손상</span>
<i class="cb" style="left:393px;top:267.7px"></i>
<span class="t" style="left:412px;top:267.7px;">완전</span>
<i class="cb" style="left:469px;top:267.7px"></i>
<span class="t" style="left:488px;top:267.7px;">불완전</span>
<i class="cb" style="left:393px;top:315px"></i>
<span class="t" style="left:412px;top:315px;">완전</span>
<i class="cb" style="left:469px;top:315px"></i>
<span class="t" style="left:488px;top:315px;">불완전</span>
<span class="t" style="left:493.5px;top:257px;width:200px;text-align:center;">장애 정도</span>
<span class="t" style="left:493.5px;top:304px;width:200px;text-align:center;">장애 정도</span>
<i class="rd" style="left:645px;top:244.5px"></i>
<span class="t" style="left:665px;top:243.5px;">심한 장애</span>
<i class="rd" style="left:645px;top:268.5px"></i>
<span class="t" style="left:665px;top:267.5px;">심하지 않은 장애</span>
<i class="rd" style="left:645px;top:291.5px"></i>
<span class="t" style="left:665px;top:290.5px;">심한 장애</span>
<i class="rd" style="left:645px;top:314.5px"></i>
<span class="t" style="left:665px;top:313.5px;">심하지 않은 장애</span>
<div class="gb" style="left:10px;top:345px;width:796px;height:242px;"></div>
<div class="abs" style="left:11px;top:346px;width:794px;height:31px;background:linear-gradient(#fff,#efefef)"></div>
<span class="t" style="left:15px;top:354px;">처방 보조기기</span>
<i class="hl" style="left:11px;top:377px;width:794px"></i>
<i class="hl" style="left:11px;top:423px;width:794px"></i>
<i class="hl" style="left:11px;top:446px;width:794px"></i>
<i class="hl" style="left:11px;top:470px;width:794px"></i>
<i class="hl" style="left:11px;top:494px;width:794px"></i>
<i class="vl" style="left:275px;top:378px;height:45px"></i>
<i class="vl" style="left:275px;top:471px;height:115px"></i>
<i class="cb" style="left:22px;top:394px"></i>
<span class="t" style="left:41px;top:394px;">자세 보조용구</span>
<i class="cb" style="left:287px;top:382px"></i>
<span class="t" style="left:306px;top:382px;">몸통 및 골반 지지대</span>
<i class="cb" style="left:287px;top:405.5px"></i>
<span class="t" style="left:306px;top:405.5px;">팔 지지대 및 랩트레이<span class="q">(</span><span style="letter-spacing:.2px">lab tray</span><span class="q">)</span></span>
<i class="cb" style="left:551px;top:382px"></i>
<span class="t" style="left:570px;top:382px;">머리 및 목 지지대</span>
<i class="cb" style="left:551px;top:405.5px"></i>
<span class="t" style="left:570px;top:405.5px;">다리 및 발 지지대</span>
<i class="cb" style="left:22px;top:427.5px"></i>
<span class="t" style="left:41px;top:427.5px;">이동식전동리프트</span>
<i class="cb" style="left:287px;top:427.5px"></i>
<span class="t" style="left:306px;top:427.5px;">욕창예방매트리스</span>
<i class="cb" style="left:551px;top:427.5px"></i>
<span class="t" style="left:570px;top:427.5px;">욕창예방방석</span>
<i class="cb" style="left:22px;top:451.5px"></i>
<span class="t" style="left:41px;top:451.5px;">맞춤형 교정신발류</span>
<i class="cb" style="left:287px;top:451.5px"></i>
<span class="t" style="left:306px;top:451.5px;">전방보행차</span>
<i class="cb" style="left:551px;top:451.5px"></i>
<span class="t" style="left:570px;top:451.5px;">후방보행차</span>
<i class="cb" style="left:22px;top:475.5px"></i>
<span class="t" style="left:41px;top:475.5px;">의지ㆍ보조기</span>
<span class="t" style="left:287px;top:475px;">유형 <span class="p">:</span></span>
<i class="hl" style="left:332px;top:488px;width:180px;background:#8a8a8a"></i>
<i class="cb" style="left:551px;top:475.5px"></i>
<span class="t" style="left:570px;top:475.5px;">우</span>
<i class="cb" style="left:684px;top:475.5px"></i>
<span class="t" style="left:703px;top:475.5px;">좌</span>
<i class="cb" style="left:22px;top:522px"></i>
<span class="t" style="left:41px;top:522px;">다리 의지 소모품</span>
<span class="t" style="left:25.5px;top:544px;"><span class="q">(</span></span>
<i class="cb" style="left:34px;top:544px"></i>
<span class="t" style="left:54px;top:544px;">우</span>
<span class="t" style="left:77px;top:544px;"><span class="p">/</span></span>
<i class="cb" style="left:93px;top:544px"></i>
<span class="t" style="left:113px;top:544px;">좌<span class="q">)</span></span>
<span class="t" style="left:287px;top:497.5px;">넓적다리 의지</span>
<span class="t" style="left:384.5px;top:497.5px;"><span class="q">(</span></span>
<i class="cb" style="left:393px;top:497.5px"></i>
<span class="t" style="left:412px;top:497.5px;">일반형 소켓</span>
<i class="cb" style="left:490px;top:497.5px"></i>
<span class="t" style="left:509px;top:497.5px;">실리콘형 소켓</span>
<i class="cb" style="left:599px;top:497.5px"></i>
<span class="t" style="left:618px;top:497.5px;word-spacing:-1px">실리콘라이너 <span class="q">)</span> 교체</span>
<span class="t" style="left:287px;top:520.5px;">종아리 의지</span>
<span class="t" style="left:384.5px;top:520.5px;"><span class="q">(</span></span>
<i class="cb" style="left:393px;top:520.5px"></i>
<span class="t" style="left:412px;top:520.5px;">일반형 소켓</span>
<i class="cb" style="left:490px;top:520.5px"></i>
<span class="t" style="left:509px;top:520.5px;">실리콘형 소켓</span>
<i class="cb" style="left:599px;top:520.5px"></i>
<span class="t" style="left:618px;top:520.5px;word-spacing:-1px">실리콘라이너 <span class="q">)</span> 교체</span>
<span class="t" style="left:287px;top:543.5px;">무릎관절 의지</span>
<span class="t" style="left:384.5px;top:543.5px;"><span class="q">(</span></span>
<i class="cb" style="left:393px;top:543.5px"></i>
<span class="t" style="left:412px;top:543.5px;">일반형 소켓</span>
<i class="cb" style="left:490px;top:543.5px"></i>
<span class="t" style="left:509px;top:543.5px;">실리콘형 소켓</span>
<i class="cb" style="left:599px;top:543.5px"></i>
<span class="t" style="left:618px;top:543.5px;word-spacing:-1px">실리콘라이너 <span class="q">)</span> 교체</span>
<span class="t" style="left:287px;top:566.5px;">발목 의지</span>
<span class="t" style="left:384.5px;top:566.5px;"><span class="q">(</span></span>
<i class="cb" style="left:393px;top:566.5px"></i>
<span class="t" style="left:412px;top:566.5px;">실리콘형 소켓</span>
<i class="cb" style="left:502px;top:566.5px"></i>
<span class="t" style="left:521px;top:566.5px;word-spacing:-1px">실리콘라이너 <span class="q">)</span> 교체</span>
<span class="t" style="left:308px;top:596px;width:200px;text-align:center;font-weight:bold;font-size:13px;letter-spacing:1px;word-spacing:2px;color:#111">검 사 결 과</span>
<div class="abs" style="left:10px;top:611px;width:796px;height:3px;background:linear-gradient(90deg,#fff 0,#bbb 18%,#000 45%,#000 55%,#bbb 82%,#fff 100%)"></div>
<div class="gb" style="left:10px;top:625px;width:796px;height:90px;"></div>
<div class="abs" style="left:11px;top:626px;width:794px;height:31px;background:linear-gradient(#fff,#efefef)"></div>
<span class="t" style="left:15px;top:634px;">자세보조 용구</span>
<i class="hl" style="left:11px;top:657px;width:794px"></i>
<div class="abs" style="left:11px;top:658px;width:139px;height:60px;background:#eff4fa"></div>
<i class="vl" style="left:150px;top:658px;height:54px"></i>
<i class="hl" style="left:11px;top:680px;width:794px"></i>
<span class="t" style="left:-20px;top:662px;width:200px;text-align:center;">다리 맨손근력검사</span>
<span class="t" style="left:-20px;top:690px;width:200px;text-align:center;">근동작기능 분류체계</span>
<span class="t" style="left:246px;top:662px;">우 <span class="q">(</span></span>
<i class="hl" style="left:269px;top:675px;width:80px;background:#8a8a8a"></i>
<span class="t" style="left:352px;top:662px;"><span class="q">)</span> 등급</span>
<span class="t" style="left:571px;top:662px;">좌 <span class="q">(</span></span>
<i class="hl" style="left:594px;top:675px;width:81px;background:#8a8a8a"></i>
<span class="t" style="left:677px;top:662px;"><span class="q">)</span> 등급</span>
</div>
</body></html>
